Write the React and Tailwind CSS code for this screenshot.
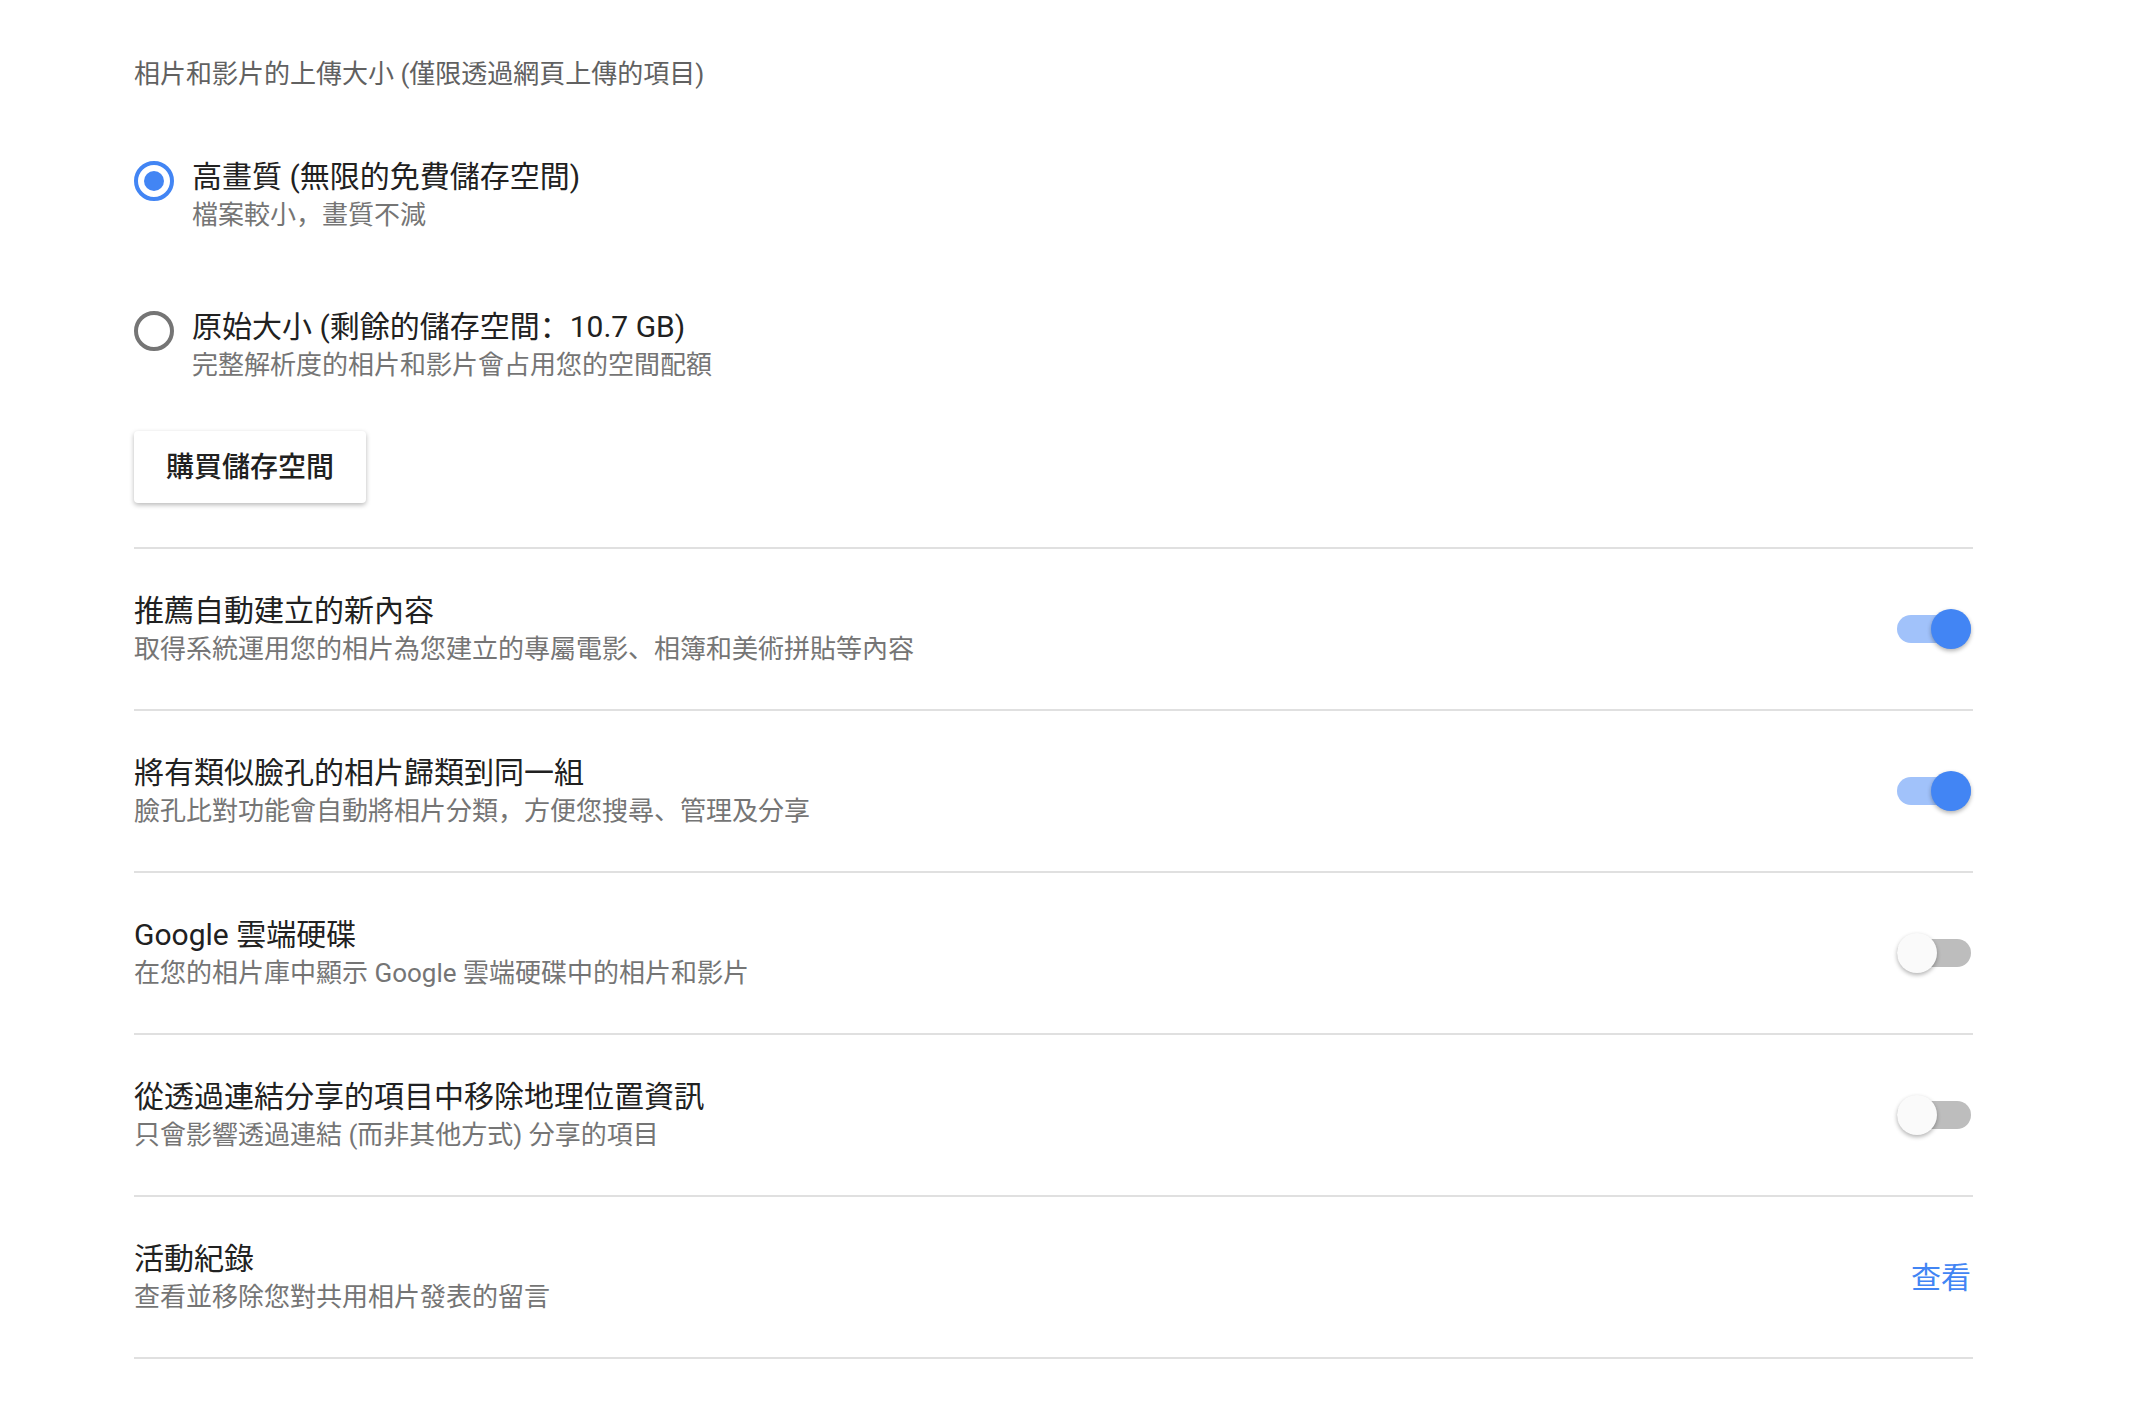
const rows = [
  {
    title: "推薦自動建立的新內容",
    desc: "取得系統運用您的相片為您建立的專屬電影、相簿和美術拼貼等內容",
    on: true,
  },
  {
    title: "將有類似臉孔的相片歸類到同一組",
    desc: "臉孔比對功能會自動將相片分類，方便您搜尋、管理及分享",
    on: true,
  },
  {
    title: "Google 雲端硬碟",
    desc: "在您的相片庫中顯示 Google 雲端硬碟中的相片和影片",
    on: false,
  },
  {
    title: "從透過連結分享的項目中移除地理位置資訊",
    desc: "只會影響透過連結 (而非其他方式) 分享的項目",
    on: false,
  },
  {
    title: "活動紀錄",
    desc: "查看並移除您對共用相片發表的留言",
    link: "查看",
  },
];

function Radio({ checked }) {
  return (
    <span
      className={
        checked
          ? "mt-[4px] flex h-[40px] w-[40px] shrink-0 items-center justify-center rounded-full border-[4px] border-[#4285f4]"
          : "mt-[4px] flex h-[40px] w-[40px] shrink-0 items-center justify-center rounded-full border-[4px] border-[#757575]"
      }
    >
      {checked && <span className="h-[20px] w-[20px] rounded-full bg-[#4285f4]" />}
    </span>
  );
}

function Toggle({ on }) {
  return (
    <div className="relative flex h-[40px] w-[74px] items-center">
      <div
        className={
          on
            ? "h-[28px] w-full rounded-full bg-[#a1c2fa]"
            : "h-[28px] w-full rounded-full bg-[#bdbdbd]"
        }
      />
      <div
        className={
          on
            ? "absolute right-0 top-0 h-[40px] w-[40px] rounded-full bg-[#4285f4] shadow-[0_2px_4px_rgba(0,0,0,0.3)]"
            : "absolute left-0 top-0 h-[40px] w-[40px] rounded-full bg-[#fafafa] shadow-[0_2px_4px_rgba(0,0,0,0.3)]"
        }
      />
    </div>
  );
}

function Option({ checked, title, desc }) {
  return (
    <div className="flex gap-[18px]">
      <Radio checked={checked} />
      <div>
        <div className="h-[40px] text-[30px] leading-[40px] text-[#212121]">{title}</div>
        <div className="text-[26px] leading-[36px] text-[#757575]">{desc}</div>
      </div>
    </div>
  );
}

export default function App() {
  return (
    <div
      className="min-h-screen bg-white pl-[134px] pt-[56px]"
      style={{ fontFamily: 'Roboto, "Noto Sans CJK JP", "Noto Sans CJK TC", sans-serif' }}
    >
      <div className="w-[1839px]">
        <p className="text-[26px] leading-[36px] text-[#616161]">
          相片和影片的上傳大小 (僅限透過網頁上傳的項目)
        </p>

        <div className="mt-[65px] flex flex-col gap-[74px]">
          <Option checked title="高畫質 (無限的免費儲存空間)" desc="檔案較小，畫質不減" />
          <Option
            title={
              <>
                原始大小 (剩餘的儲存空間
                <span className="font-['Noto_Sans_CJK_SC'] leading-none">：</span>
                10.7 GB)
              </>
            }
            desc="完整解析度的相片和影片會占用您的空間配額"
          />
        </div>

        <button
          type="button"
          className="mt-[48px] h-[72px] rounded-[4px] bg-white px-[32px] pt-[2px] text-[28px] font-medium text-[#212121] shadow-[0_2px_5px_rgba(0,0,0,0.28)]"
        >
          購買儲存空間
        </button>

        <div className="mt-[44px] border-t-2 border-[#e0e0e0]">
          {rows.map((row) => (
            <div
              key={row.title}
              className="flex h-[162px] items-center justify-between border-b-2 border-[#e0e0e0] pr-[2px]"
            >
              <div>
                <div className="text-[30px] leading-[40px] text-[#212121]">{row.title}</div>
                <div className="text-[26px] leading-[36px] text-[#757575]">{row.desc}</div>
              </div>
              {row.link ? (
                <a className="pt-[2px] text-[30px] leading-[40px] text-[#4285f4]">{row.link}</a>
              ) : (
                <Toggle on={row.on} />
              )}
            </div>
          ))}
        </div>
      </div>
    </div>
  );
}
